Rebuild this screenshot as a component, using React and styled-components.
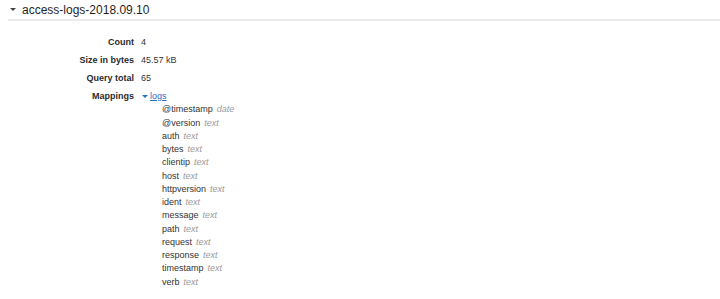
import React from "react";
import styled, { createGlobalStyle } from "styled-components";

const GlobalStyle = createGlobalStyle`
  body {
    margin: 0;
    background: #ffffff;
    font-family: "Liberation Sans", Arial, Helvetica, sans-serif;
    color: #333333;
  }
`;

const Page = styled.div`
  padding-left: 8px;
`;

const Header = styled.div`
  display: flex;
  align-items: center;
  height: 19px;
  border-bottom: 2px solid #ebebeb;
  font-size: 12px;
  color: #1f1f1f;
`;

const Caret = styled.span`
  display: inline-block;
  width: 0;
  height: 0;
  border-left: ${(p) => p.size}px solid transparent;
  border-right: ${(p) => p.size}px solid transparent;
  border-top: ${(p) => p.size + 0.5}px solid ${(p) => p.color};
  margin-left: ${(p) => p.left}px;
  margin-right: ${(p) => p.right}px;
`;

const Details = styled.div`
  display: grid;
  grid-template-columns: 126px auto;
  column-gap: 7px;
  row-gap: 4.67px;
  margin-top: 15px;
  font-size: 9px;
  line-height: 13.33px;
`;

const Label = styled.div`
  text-align: right;
  font-weight: bold;
  color: #2b2b2b;
`;

const Value = styled.div`
  color: #333333;
`;

const Toggle = styled.div`
  display: flex;
  align-items: center;
  margin-left: 1px;
`;

const Link = styled.a`
  color: #2a6fc9;
  text-decoration: underline;
  cursor: pointer;
`;

const FieldList = styled.ul`
  list-style: none;
  margin: 0;
  padding: 0 0 0 21px;
  line-height: 13.25px;
`;

const Field = styled.li`
  color: #333333;
`;

const Type = styled.span`
  font-style: italic;
  color: #9a9a9a;
  margin-left: 4px;
`;

const fields = [
  ["@timestamp", "date"],
  ["@version", "text"],
  ["auth", "text"],
  ["bytes", "text"],
  ["clientip", "text"],
  ["host", "text"],
  ["httpversion", "text"],
  ["ident", "text"],
  ["message", "text"],
  ["path", "text"],
  ["request", "text"],
  ["response", "text"],
  ["timestamp", "text"],
  ["verb", "text"],
];

export default function App() {
  return (
    <Page>
      <GlobalStyle />
      <Header>
        <Caret size={3} color="#444" left={2} right={6} />
        access-logs-2018.09.10
      </Header>
      <Details>
        <Label>Count</Label>
        <Value>4</Value>
        <Label>Size in bytes</Label>
        <Value>45.57 kB</Value>
        <Label>Query total</Label>
        <Value>65</Value>
        <Label>Mappings</Label>
        <Value>
          <Toggle>
            <Caret size={3} color="#2a6fc9" left={0} right={2} />
            <Link>logs</Link>
          </Toggle>
          <FieldList>
            {fields.map(([name, type]) => (
              <Field key={name}>
                {name}
                <Type>{type}</Type>
              </Field>
            ))}
          </FieldList>
        </Value>
      </Details>
    </Page>
  );
}
